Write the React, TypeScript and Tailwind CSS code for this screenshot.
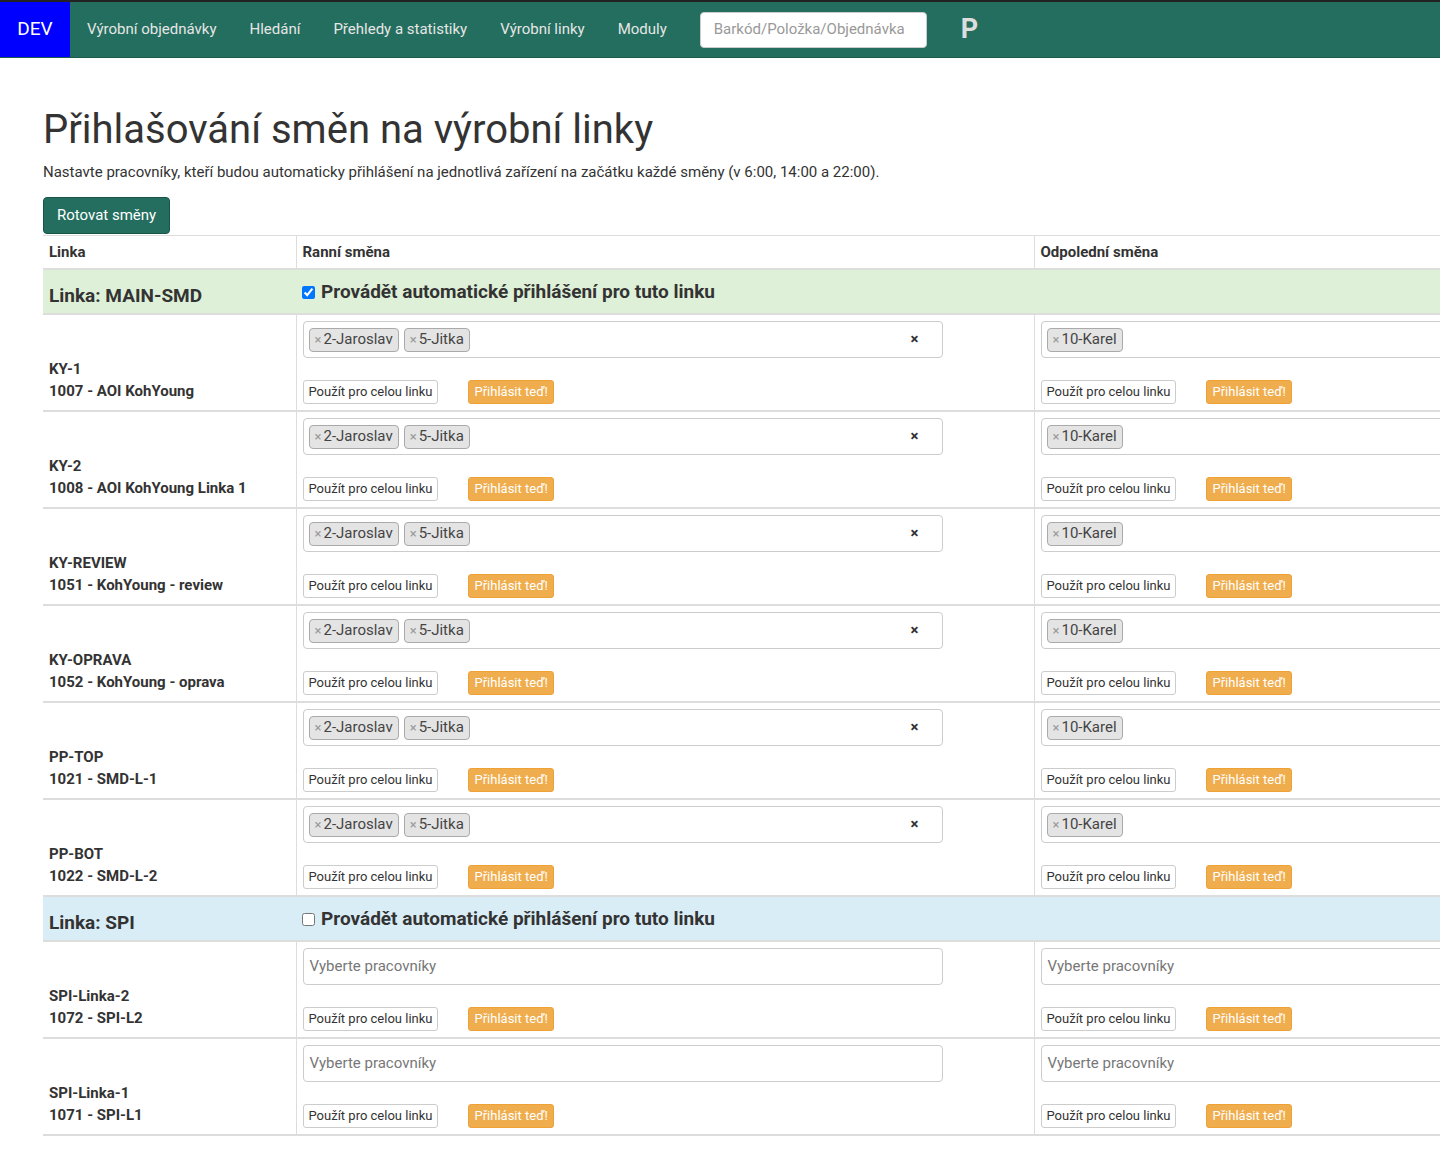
import React from "react";

const rows = [
  ["KY-1", "1007 - AOI KohYoung"],
  ["KY-2", "1008 - AOI KohYoung Linka 1"],
  ["KY-REVIEW", "1051 - KohYoung - review"],
  ["KY-OPRAVA", "1052 - KohYoung - oprava"],
  ["PP-TOP", "1021 - SMD-L-1"],
  ["PP-BOT", "1022 - SMD-L-2"],
];
const spi = [
  ["SPI-Linka-2", "1072 - SPI-L2"],
  ["SPI-Linka-1", "1071 - SPI-L1"],
];

function Tag({ t }: { t: string }) {
  return (
    <span className="inline-flex items-center h-[24px] px-[5px] mr-[5px] rounded-[4px] border border-[#aaa] bg-[#e4e4e4] text-[15px] text-[#444]">
      <span className="text-[#999] text-[13px] mr-[2px]">×</span>{t}
    </span>
  );
}

function Cell({ tags, clear, wide }: { tags: string[]; clear?: boolean; wide?: boolean }) {
  return (
    <td className="border-l border-[#ddd] px-[6px] pt-[6px] pb-[6px] align-top">
      <div className={`h-[37px] border border-[#ccc] rounded-[4px] flex items-center px-[5px] ${wide ? "w-[420px]" : "w-[640px]"}`}>
        {tags.length ? tags.map((t) => <Tag key={t} t={t} />) : <span className="text-[15px] text-[#777] ml-[1px]">Vyberte pracovníky</span>}
        {clear && <span className="ml-auto mr-[18px] text-[15px] font-bold text-[#333]">×</span>}
      </div>
      <div className="flex items-center mt-[22px] gap-[30px]">
        <span className="h-[24px] px-[5px] border border-[#ccc] rounded-[3px] text-[13px] flex items-center text-[#333]">Použít pro celou linku</span>
        <span className="h-[24px] px-[5px] bg-[#f0ad4e] border border-[#eea236] rounded-[3px] text-[13px] flex items-center text-white">Přihlásit teď!</span>
      </div>
    </td>
  );
}

function Group({ name, checked, bg }: { name: string; checked: boolean; bg: string }) {
  return (
    <tr className={`${bg} border-t-2 border-[#ddd]`}>
      <td className="px-[6px] h-[45px] pt-[10px] text-[19px] font-bold text-[#333]">Linka: {name}</td>
      <td colSpan={2} className="px-[6px] align-top pt-[8px] text-[19px] font-bold text-[#333]">
        <label className="flex items-center gap-[6px]">
          <input type="checkbox" defaultChecked={checked} className="w-[13px] h-[13px]" />
          Provádět automatické přihlášení pro tuto linku
        </label>
      </td>
    </tr>
  );
}

function DataRow({ r, empty }: { r: string[]; empty?: boolean }) {
  return (
    <tr className="border-t-2 border-[#ddd]">
      <td className="px-[6px] align-bottom pb-[8px] text-[15px] font-bold text-[#333] leading-[22px]">
        <div>{r[0]}</div>
        <div>{r[1]}</div>
      </td>
      <Cell tags={empty ? [] : ["2-Jaroslav", "5-Jitka"]} clear={!empty} />
      <Cell tags={empty ? [] : ["10-Karel"]} />
    </tr>
  );
}

export default function App() {
  return (
    <div className="w-[1440px] overflow-hidden bg-white" style={{ fontFamily: "Roboto, 'Liberation Sans', sans-serif" }}>
      <nav className="h-[58px] bg-[#236e5e] border-t-2 border-[#222] border-b border-b-[#1d5a4c] flex items-center text-[15px] text-[#e6e6e6]">
        <div className="bg-[#0000ff] h-full w-[70px] flex items-center justify-center text-[19px] text-white">DEV</div>
        <span className="ml-[17px]">Výrobní objednávky</span>
        <span className="ml-[33px]">Hledání</span>
        <span className="ml-[33px]">Přehledy a statistiky</span>
        <span className="ml-[33px]">Výrobní linky</span>
        <span className="ml-[33px]">Moduly</span>
        <div className="ml-[33px] w-[227px] h-[36px] bg-white rounded-[4px] border border-[#ccc] flex items-center px-[13px] text-[#999]">Barkód/Položka/Objednávka</div>
        <span className="ml-[34px] text-[27px] font-bold text-[#ddd]">P</span>
      </nav>
      <div className="pl-[43px]">
        <h1 className="mt-[48px] text-[40px] text-[#333] leading-[48px]">Přihlašování směn na výrobní linky</h1>
        <p className="mt-[7px] text-[15px] text-[#333]">Nastavte pracovníky, kteří budou automaticky přihlášení na jednotlivá zařízení na začátku každé směny (v 6:00, 14:00 a 22:00).</p>
        <button className="mt-[13px] h-[37px] px-[13px] bg-[#236e5e] border border-[#1a5347] rounded-[4px] text-white text-[15px]">Rotovat směny</button>
        <table className="mt-[1px] border-collapse table-fixed w-[1732px] border-b-2 border-[#ddd]">
          <colgroup>
            <col className="w-[253px]" />
            <col className="w-[738px]" />
            <col className="w-[741px]" />
          </colgroup>
          <thead>
            <tr className="border-t border-[#ddd] text-left text-[15px] font-bold text-[#333]">
              <th className="px-[6px] h-[34px]">Linka</th>
              <th className="px-[6px] border-l border-[#ddd]">Ranní směna</th>
              <th className="px-[6px] border-l border-[#ddd]">Odpolední směna</th>
            </tr>
          </thead>
          <tbody>
            <Group name="MAIN-SMD" checked bg="bg-[#dff0d8]" />
            {rows.map((r) => <DataRow key={r[0]} r={r} />)}
            <Group name="SPI" checked={false} bg="bg-[#d9edf7]" />
            {spi.map((r) => <DataRow key={r[0]} r={r} empty />)}
          </tbody>
        </table>
      </div>
    </div>
  );
}
